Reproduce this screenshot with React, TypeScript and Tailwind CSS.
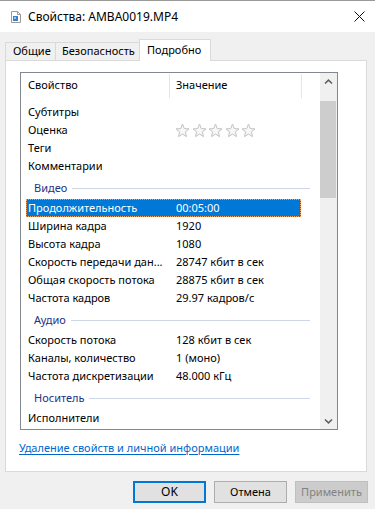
import React from "react";

const font = { fontFamily: '"Segoe UI", "Noto Sans", "Open Sans", sans-serif' };

type Row = { name: string; value?: string; stars?: boolean; selected?: boolean };
type Block = { group?: string; rows: Row[] };

const blocks: Block[] = [
  {
    rows: [
      { name: "Субтитры" },
      { name: "Оценка", stars: true },
      { name: "Теги" },
      { name: "Комментарии" },
    ],
  },
  {
    group: "Видео",
    rows: [
      { name: "Продолжительность", value: "00:05:00", selected: true },
      { name: "Ширина кадра", value: "1920" },
      { name: "Высота кадра", value: "1080" },
      { name: "Скорость передачи дан...", value: "28747 кбит в сек" },
      { name: "Общая скорость потока", value: "28875 кбит в сек" },
      { name: "Частота кадров", value: "29.97 кадров/с" },
    ],
  },
  {
    group: "Аудио",
    rows: [
      { name: "Скорость потока", value: "128 кбит в сек" },
      { name: "Каналы, количество", value: "1 (моно)" },
      { name: "Частота дискретизации", value: "48.000 кГц" },
    ],
  },
  {
    group: "Носитель",
    rows: [{ name: "Исполнители" }],
  },
];

function Star() {
  return (
    <svg width="15" height="15" viewBox="0 0 15 15">
      <polygon
        points="7.5,1 9.3,5.6 14,5.9 10.4,8.9 11.5,13.6 7.5,11 3.5,13.6 4.6,8.9 1,5.9 5.7,5.6"
        fill="#f7f7f7"
        stroke="#c2c2c2"
        strokeWidth="1"
        strokeLinejoin="round"
      />
    </svg>
  );
}

function FileIcon() {
  return (
    <svg width="10" height="12" viewBox="0 0 10 12">
      <path d="M0.5 0.5 H6.5 L9.5 3.5 V11.5 H0.5 Z" fill="#ffffff" stroke="#9a9a9a" strokeWidth="1" />
      <path d="M6.5 0.5 V3.5 H9.5" fill="none" stroke="#9a9a9a" strokeWidth="1" />
      <rect x="2" y="5" width="5" height="5" fill="#3f7fc6" />
      <rect x="3" y="6" width="2" height="2" fill="#9cc4ee" />
    </svg>
  );
}

function Chevron({ down }: { down?: boolean }) {
  return (
    <svg width="9" height="6" viewBox="0 0 9 6">
      <path
        d={down ? "M1 1.5 L4.5 4.8 L8 1.5" : "M1 4.5 L4.5 1.2 L8 4.5"}
        fill="none"
        stroke="#606060"
        strokeWidth="1.6"
      />
    </svg>
  );
}

export default function App() {
  return (
    <div className="w-[375px] h-[509px] bg-[#f0f0f0] text-[11px] text-black overflow-hidden" style={font}>
      {/* Title bar */}
      <div className="h-[32px] bg-white border-t border-[#9a9a9a] flex items-center">
        <div className="ml-[11px] mt-[1px] flex items-center">
          <FileIcon />
        </div>
        <span className="ml-[7px] text-[12px] leading-none">Свойства: AMBA0019.MP4</span>
        <div className="ml-auto mr-[10px] flex items-center">
          <svg width="11" height="11" viewBox="0 0 11 11">
            <path d="M0.5 0.5 L10.5 10.5 M10.5 0.5 L0.5 10.5" stroke="#111" strokeWidth="1" />
          </svg>
        </div>
      </div>

      {/* Tabs */}
      <div className="h-[28px] flex items-end pl-[5px]">
        <div className="h-[18px] px-[7px] flex items-center border border-b-0 border-[#d9d9d9] bg-[#f0f0f0] w-[51px]">
          Общие
        </div>
        <div className="h-[18px] -ml-px pl-[6px] flex items-center border border-b-0 border-[#d9d9d9] bg-[#f0f0f0] w-[85px]">
          Безопасность
        </div>
        <div className="relative z-10 -mb-px -ml-px h-[22px] pl-[7px] flex items-center border border-b-0 border-[#d9d9d9] bg-white w-[72px] pb-[1px]">
          Подробно
        </div>
      </div>

      {/* Panel */}
      <div className="ml-[5px] w-[362px] h-[412px] bg-white border border-[#d9d9d9] pt-[11px] pl-[14px]">
        {/* List box */}
        <div className="w-[318px] h-[358px] border border-[#828790] flex">
          <div className="flex-1 flex flex-col overflow-hidden">
            {/* header */}
            <div className="h-[25px] flex items-center shrink-0">
              <div className="w-[148px] pl-[7px]">Свойство</div>
              <div className="w-px h-[24px] bg-[#e5e5e5]" />
              <div className="w-[131px] pl-[6px]">Значение</div>
              <div className="w-px h-[24px] bg-[#e5e5e5]" />
            </div>
            <div className="h-[5px] shrink-0" />
            {blocks.map((b, bi) => (
              <div key={bi}>
                {b.group && (
                  <div className="h-[24px] flex items-center pt-[3px] pl-[13px] pr-[10px]">
                    <span className="text-[#1e3287]">{b.group}</span>
                    <div className="flex-1 h-px bg-[#cdd6e5] ml-[5px]" />
                  </div>
                )}
                {b.rows.map((r, ri) => (
                  <div
                    key={ri}
                    className={
                      r.selected
                        ? "ml-[5px] w-[275px] h-[18px] flex items-center bg-[#0078d7] text-white border border-dotted border-[#f0a060]"
                        : "ml-[5px] w-[275px] h-[18px] flex items-center border border-transparent"
                    }
                  >
                    <div className="w-[149px] pl-[1px] whitespace-nowrap overflow-hidden">{r.name}</div>
                    <div className="flex-1 whitespace-nowrap">
                      {r.stars ? (
                        <div className="flex gap-[1.5px] -ml-[1px]">
                          <Star />
                          <Star />
                          <Star />
                          <Star />
                          <Star />
                        </div>
                      ) : (
                        r.value
                      )}
                    </div>
                  </div>
                ))}
              </div>
            ))}
          </div>
          {/* scrollbar */}
          <div className="w-[17px] bg-[#f0f0f0] flex flex-col">
            <div className="h-[17px] flex items-center justify-center">
              <Chevron />
            </div>
            <div className="flex-1 relative">
              <div className="mt-[11px] h-[97px] w-[16px] bg-[#cdcdcd]" />
            </div>
            <div className="h-[17px] flex items-center justify-center">
              <Chevron down />
            </div>
          </div>
        </div>
        {/* link */}
        <div className="mt-[10px] leading-[16px] -ml-px">
          <span className="text-[#0066cc] underline underline-offset-2">Удаление свойств и личной информации</span>
        </div>
      </div>

      {/* Buttons */}
      <div className="mt-[9px] flex justify-end pr-[7px] gap-[8px]">
        <div className="w-[73px] h-[22px] border-2 border-[#0078d7] bg-[#e1e1e1] flex items-center justify-center text-[12px]">
          OK
        </div>
        <div className="w-[73px] h-[22px] border border-[#adadad] bg-[#e1e1e1] flex items-center justify-center">
          Отмена
        </div>
        <div className="w-[73px] h-[22px] border border-[#bfbfbf] bg-[#cccccc] text-[#838383] flex items-center justify-center">
          Применить
        </div>
      </div>
    </div>
  );
}
